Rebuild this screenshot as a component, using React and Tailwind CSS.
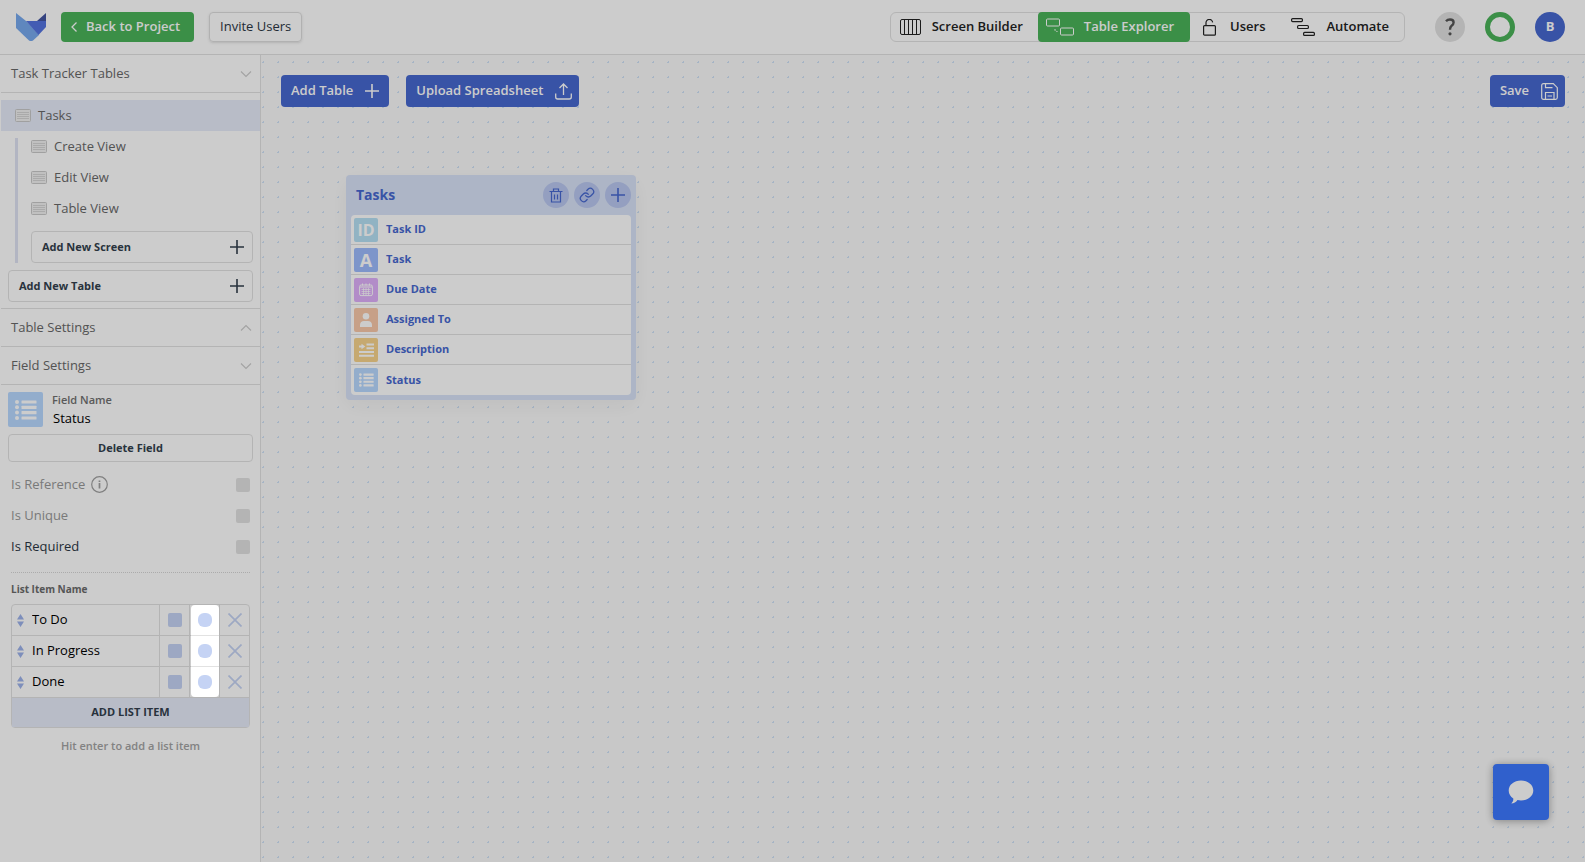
import React, { useState } from 'react';

const line = { fill: 'none', stroke: 'currentColor' };

function Logo() {
  return (
    <svg className="h-7 w-[30px]" viewBox="0 0 30 28" aria-label="Home" role="img">
      <path d="M0 0l10 8 13 14-6 5.500q-2 1-4 0L0 15z" fill="#77a9ee" />
      <path d="M10 8h20v6L22.500 22z" fill="#5474e0" />
      <path d="M30 0v8h-9z" fill="#41539f" />
    </svg>
  );
}

function Plus({ className }) {
  return (
    <svg className={className} viewBox="0 0 14 14" {...line} strokeWidth="1.6" aria-hidden="true">
      <path d="M7 0v14M0 7h14" />
    </svg>
  );
}

function Chevron({ up }) {
  return (
    <svg className="h-2 w-3 text-[#ccc]" viewBox="0 0 12 8" {...line} strokeWidth="1.1" aria-hidden="true">
      <path d={up ? 'M1 6.500l5-5 5 5' : 'M1 1.500l5 5 5-5'} />
    </svg>
  );
}

function SheetIcon() {
  return (
    <svg className="h-[13px] w-4 shrink-0 text-[#c8c8c8]" viewBox="0 0 16 13" {...line} aria-hidden="true">
      <rect x=".5" y=".5" width="15" height="12" rx="1" fill="#f0f0f0" />
      <path d="M2 3.500h12M2 5.500h12M2 7.500h12M2 9.500h12" strokeWidth=".7" />
    </svg>
  );
}

function ListGlyph({ className }) {
  return (
    <svg className={className} viewBox="0 0 22 20" fill="#fff" aria-hidden="true">
      {[0, 5.3, 10.600, 16].map((y) => (
        <g key={y}>
          <circle cx="2" cy={y + 2} r="2" />
          <rect x="6.500" y={y + 0.4} width="15" height="3.200" rx=".5" />
        </g>
      ))}
    </svg>
  );
}

const glyphs = {
  id: <span className="text-base leading-6 font-bold text-white">ID</span>,
  text: <span className="text-lg leading-6 font-bold text-white">A</span>,
  date: (
    <svg className="h-3.5 w-3.5" viewBox="0 0 14 14" fill="none" stroke="#fff" aria-hidden="true">
      <rect x=".6" y="2" width="12.800" height="10.600" rx="1.500" />
      <path d="M3.500 .5v2M7 .5v2M10.500 .5v2M1 4h12" />
      <path d="M2.500 6.500h9M2.500 8.500h9M2.500 10.500h9M4.500 5v7M7 5v7M9.500 5v7" strokeWidth=".7" />
    </svg>
  ),
  user: (
    <svg className="h-3.5 w-3" viewBox="0 0 12 14" fill="#fff" aria-hidden="true">
      <circle cx="6" cy="3.300" r="3.300" />
      <path d="M0 14v-2c0-2.600 1.700-4 4-4h4c2.300 0 4 1.400 4 4v2z" />
    </svg>
  ),
  long: (
    <svg className="h-3.5 w-[15px]" viewBox="0 0 15 14" fill="#fff" aria-hidden="true">
      <path d="M0 2.500h2.500V.7L6.300 3.500 2.500 6.300V4.500H0zM7.500 .5H15v2H7.500zM7.500 4.300H15v2H7.500zM0 8h15v2H0zM0 11.700h15v2H0z" />
    </svg>
  ),
  list: <ListGlyph className="h-3.5 w-[15px]" />,
};

const fields = [
  ['Task ID', 'id', 'bg-[#b6e0f4]'],
  ['Task', 'text', 'bg-[#9dbbfd]'],
  ['Due Date', 'date', 'bg-[#dfb0fb]'],
  ['Assigned To', 'user', 'bg-[#f9c9a9]'],
  ['Description', 'long', 'bg-[#f8d48c]'],
  ['Status', 'list', 'bg-[#b8d9ff]'],
];

function SectionHeader({ title, up }) {
  return (
    <button className="flex h-[38px] w-full items-center justify-between border-b border-[#e2e2e2] pr-2 pl-2.5 text-[13px] font-medium text-[#686868]">
      {title}
      <Chevron up={up} />
    </button>
  );
}

function SideLink({ children, active }) {
  return (
    <a
      href="#screen"
      className={
        active
          ? 'flex h-[31px] items-center gap-[7px] bg-[#e6ebf9] pl-3.5 text-[13px] font-medium text-[#686868]'
          : 'flex h-[31px] items-center gap-[7px] text-[13px] font-medium text-[#686868]'
      }
    >
      <SheetIcon />
      {children}
    </a>
  );
}

function AddButton({ children }) {
  return (
    <button className="flex h-8 w-full items-center justify-between rounded-sm border border-[#e2e2e2] px-2 pl-2.5 text-[11px] font-bold text-[#333f4d]">
      {children}
      <Plus className="h-3.5 w-3.5" />
    </button>
  );
}

function CheckRow({ id, label, disabled, info }) {
  return (
    <div className="flex h-[31px] items-center justify-between">
      <div className="flex items-center gap-1.5">
        <label
          htmlFor={id}
          className={disabled ? 'text-[13px] font-medium text-[#989898]' : 'text-[13px] font-medium text-[#2b3644]'}
        >
          {label}
        </label>
        {info && (
          <svg className="h-[17px] w-[17px] text-[#a0a0a0]" viewBox="0 0 17 17" {...line} strokeWidth="1.200" aria-hidden="true">
            <circle cx="8.500" cy="8.500" r="7.800" />
            <path d="M8.500 7v5.500M8.500 4.500v1.500" strokeWidth="1.700" />
          </svg>
        )}
      </div>
      <input
        id={id}
        type="checkbox"
        disabled={disabled}
        className="h-3.5 w-3.5 appearance-none rounded-xs bg-[#e2e2e2] checked:bg-[#4768d0]"
      />
    </div>
  );
}

function ListItem({ name }) {
  const [value, setValue] = useState(name);
  return (
    <li className="flex h-[31px] divide-x divide-[#e2e2e2] border-b border-[#e2e2e2]">
      <div className="flex min-w-0 flex-1 items-center gap-2 pl-[5px]">
        <svg className="h-[13px] w-[7px] shrink-0" viewBox="0 0 7 13" fill="#9db2ea" aria-hidden="true">
          <path d="M3.500 0L7 5.500H0zM3.500 13L7 7.500H0z" />
        </svg>
        <input
          aria-label="List item name"
          value={value}
          onChange={(e) => setValue(e.target.value)}
          className="w-full min-w-0 bg-transparent text-[13px] font-medium text-black outline-none"
        />
      </div>
      <div className="flex w-[30px] items-center justify-center">
        <button aria-label="Item color" className="h-3.5 w-3.5 rounded-xs bg-[#c5d3f4]" />
      </div>
      <div className="flex w-[30px] items-center justify-center">
        <button aria-label="Default item" className="h-3.5 w-3.5 rounded-md bg-[#c5d3f4]" />
      </div>
      <button aria-label="Remove item" className="flex w-[29px] items-center justify-center text-[#c5d3f4]">
        <svg className="h-3.5 w-3.5" viewBox="0 0 14 14" {...line} strokeWidth="1.700" aria-hidden="true">
          <path d="M.5 .5l13 13M13.500 .5l-13 13" />
        </svg>
      </button>
    </li>
  );
}

function TopBar() {
  return (
    <header className="flex h-[55px] items-center border-b border-[#e2e2e2] bg-white pr-5 pl-4">
      <Logo />
      <button className="ml-[15px] flex h-[30px] items-center gap-[9px] rounded-sm bg-[#4ab359] px-2.5 pr-3.5 text-[13px] font-semibold text-white">
        <svg className="h-2.5 w-1.5" viewBox="0 0 6 10" {...line} strokeWidth="1.300" aria-hidden="true">
          <path d="M5.500 .5L1 5l4.500 4.500" />
        </svg>
        Back to Project
      </button>
      <button className="ml-[15px] h-[30px] rounded-sm border border-[#dedede] px-2.5 text-[13px] font-medium text-[#2b3644] shadow-sm">
        Invite Users
      </button>
      <nav className="ml-auto flex h-[30px] items-stretch rounded-md border border-[#e2e2e2] text-[13px] font-semibold text-[#222]">
        <a href="#screens" className="flex items-center gap-[11px] pr-[15px] pl-[9px]">
          <svg className="h-4 w-[21px]" viewBox="0 0 21 16" {...line} aria-hidden="true">
            <rect x=".5" y=".5" width="20" height="15" rx="1.500" />
            <path d="M4.500 .5v15M8.500 .5v15M12.500 .5v15M16.500 .5v15" />
          </svg>
          Screen Builder
        </a>
        <a href="#tables" className="-my-px flex items-center gap-2.5 rounded-sm bg-[#4ab359] pr-4 pl-2 text-white">
          <svg className="h-[18px] w-7" viewBox="0 0 28 18" {...line} aria-hidden="true">
            <rect x=".5" y="1" width="13" height="7" rx="1" />
            <rect x="14.500" y="10" width="13" height="7" rx="1" />
            <path d="M9 11v1q0 1.500 2.500 1.500" strokeDasharray="2 1" />
          </svg>
          Table Explorer
        </a>
        <a href="#users" className="flex items-center gap-3.5 pl-[13px]">
          <svg className="h-[17px] w-[13px]" viewBox="0 0 13 17" {...line} strokeWidth="1.200" aria-hidden="true">
            <rect x=".6" y="6.600" width="11.800" height="9.600" rx="1" />
            <path d="M3 6.500V4a3.300 3.300 0 0 1 6.600-.6" />
          </svg>
          Users
        </a>
        <a href="#automate" className="flex items-center gap-[11px] pr-[15px] pl-[26px]">
          <svg className="h-[18px] w-6" viewBox="0 0 24 18" {...line} strokeWidth="1.200" aria-hidden="true">
            <rect x=".6" y=".6" width="10.800" height="3" rx="1" />
            <rect x="6.600" y="7.500" width="10.800" height="3" rx="1" />
            <rect x="12.600" y="14.400" width="10.800" height="3" rx="1" />
          </svg>
          Automate
        </a>
      </nav>
      <div className="ml-[30px] flex gap-5">
        <button aria-label="Help" className="flex h-[30px] w-[30px] items-center justify-center rounded-full bg-[#e2e2e2] text-[#555]">
          <svg className="h-[18px] w-3" viewBox="0 0 12 18" {...line} strokeWidth="2.400" aria-hidden="true">
            <path d="M2 3.200Q3.500 1.500 6 1.500q3.600 0 3.600 3 0 1.800-2 3.200Q6 8.800 6 11.800" />
            <circle cx="6" cy="15.800" r="1.600" fill="currentColor" stroke="none" />
          </svg>
        </button>
        <button aria-label="Progress" className="h-[30px] w-[30px] rounded-full border-[5px] border-[#4ab359]" />
        <button aria-label="Account" className="h-[30px] w-[30px] rounded-full bg-[#4768d0] text-[13px] font-bold text-white">
          B
        </button>
      </div>
    </header>
  );
}

function Sidebar() {
  const [name, setName] = useState('Status');
  return (
    <aside className="w-[261px] shrink-0 border-r border-[#e2e2e2] bg-white pl-px">
      <SectionHeader title="Task Tracker Tables" />
      <div className="border-b border-[#e2e2e2] pt-[7px] pb-1.5">
        <SideLink active>Tasks</SideLink>
        <div className="mb-[7px] flex gap-[13px] pr-[7px] pl-3.5">
          <div className="mt-[7px] w-[3px] bg-[#dfe3f3]" />
          <div className="flex-1">
            <SideLink>Create View</SideLink>
            <SideLink>Edit View</SideLink>
            <SideLink>Table View</SideLink>
            <div className="pt-[7px]">
              <AddButton>Add New Screen</AddButton>
            </div>
          </div>
        </div>
        <div className="px-[7px]">
          <AddButton>Add New Table</AddButton>
        </div>
      </div>
      <SectionHeader title="Table Settings" up />
      <SectionHeader title="Field Settings" />
      <div className="px-[7px] pt-[7px]">
        <div className="flex gap-2">
          <div className="flex h-[35px] w-[35px] items-center justify-center rounded-xs bg-[#b8d9ff]">
            <ListGlyph className="h-5 w-[22px]" />
          </div>
          <div className="min-w-0 flex-1">
            <label htmlFor="field-name" className="block pl-px text-[11px] leading-4 font-semibold text-[#707070]">
              Field Name
            </label>
            <input
              id="field-name"
              value={name}
              onChange={(e) => setName(e.target.value)}
              className="block h-5 w-full bg-transparent pl-0.5 text-[13px] font-medium text-black outline-none"
            />
          </div>
        </div>
        <button className="mt-1.5 h-7 w-full rounded-sm border border-[#e2e2e2] text-[11px] font-bold text-[#333f4d]">
          Delete Field
        </button>
      </div>
      <div className="mr-2.5 ml-2.5">
        <div className="border-b border-dotted border-[#d6d6d6] pt-[7px] pb-2.5">
          <CheckRow id="is-reference" label="Is Reference" disabled info />
          <CheckRow id="is-unique" label="Is Unique" disabled />
          <CheckRow id="is-required" label="Is Required" />
        </div>
        <h3 className="mt-2 text-[10px] leading-4 font-bold text-[#6b6b6b]">List Item Name</h3>
        <div className="relative mt-[7px] rounded-sm border border-[#e2e2e2]">
          <ul>
            <ListItem name="To Do" />
            <ListItem name="In Progress" />
            <ListItem name="Done" />
          </ul>
          <button className="h-[29px] w-full bg-[#e6ebf9] text-[11px] font-bold text-[#333f4d]">ADD LIST ITEM</button>
          <div className="pointer-events-none absolute top-0 right-[30px] z-50 h-[92px] w-7 rounded-sm shadow-[0_0_0_9999px_rgba(0,0,0,0.2)]" />
        </div>
        <p className="mt-2.5 text-center text-[11px] leading-4 font-semibold text-[#a3a3a3]">Hit enter to add a list item</p>
      </div>
    </aside>
  );
}

function RoundButton({ label, children }) {
  return (
    <button aria-label={label} className="flex h-[26px] w-[26px] items-center justify-center rounded-full bg-[#b9c7f0]">
      {children}
    </button>
  );
}

function TableCard() {
  return (
    <section className="mt-[68px] ml-[65px] w-[290px] rounded-sm bg-[#d9e3f8] px-[5px] pb-[5px] text-[#4768d0] shadow-[0_6px_22px_rgba(0,0,0,0.05)]">
      <header className="flex h-10 items-center gap-[5px] pl-[5px]">
        <h2 className="mr-auto text-sm font-bold">Tasks</h2>
        <RoundButton label="Delete table">
          <svg className="h-[15px] w-3.5" viewBox="0 0 14 15" {...line} strokeWidth="1.200" aria-hidden="true">
            <path d="M.5 3.500h13M4.500 3.500v-2.500h5v2.500M2.500 3.500v10.500h9V3.500M5.500 6.500v5M8.500 6.500v5" />
          </svg>
        </RoundButton>
        <RoundButton label="Link table">
          <svg className="h-4 w-4" viewBox="0 0 24 24" {...line} strokeWidth="1.900" strokeLinecap="round" aria-hidden="true">
            <path d="M10 13a5 5 0 0 0 7.540.54l3-3a5 5 0 0 0-7.070-7.070l-1.720 1.710M14 11a5 5 0 0 0-7.540-.54l-3 3a5 5 0 0 0 7.070 7.070l1.710-1.710" />
          </svg>
        </RoundButton>
        <RoundButton label="Add field">
          <Plus className="h-3.5 w-3.5" />
        </RoundButton>
      </header>
      <ul className="divide-y divide-[#e2e2e2] rounded-sm bg-white">
        {fields.map(([name, glyph, tone]) => (
          <li key={name} className="flex h-[30px] items-center gap-2 pl-[3px] text-[11px] font-bold">
            <span className={`flex h-6 w-6 items-center justify-center rounded-xs ${tone}`}>{glyphs[glyph]}</span>
            {name}
          </li>
        ))}
      </ul>
    </section>
  );
}

function Canvas() {
  return (
    <main className="min-w-0 flex-1 bg-[#fbfbfb] bg-[radial-gradient(circle,#cfe1f7_1px,transparent_1px)] bg-size-[15px_15px] bg-position-[-5px_0px] p-5">
      <div className="flex h-8 gap-[17px] text-[13px] font-semibold text-white">
        <button className="flex items-center gap-3 rounded-sm bg-[#4768d0] px-2.5">
          Add Table
          <Plus className="h-3.5 w-3.5" />
        </button>
        <button className="flex items-center gap-3 rounded-sm bg-[#4768d0] pr-[7px] pl-2.5">
          Upload Spreadsheet
          <svg className="h-[17px] w-[17px]" viewBox="0 0 17 17" {...line} strokeWidth="1.300" aria-hidden="true">
            <path d="M8.500 12V1M4.500 5l4-4 4 4M.7 10.500V14q0 2 2 2h11.600q2 0 2-2v-3.500" />
          </svg>
        </button>
        <button className="ml-auto flex items-center gap-3 rounded-sm bg-[#4768d0] pr-[7px] pl-2.5">
          Save
          <svg className="h-[17px] w-[17px]" viewBox="0 0 17 17" {...line} strokeWidth="1.200" aria-hidden="true">
            <path d="M2.500 .7h9.800l4 4v9.800q0 1.800-1.800 1.800h-12q-1.800 0-1.800-1.800v-12q0-1.800 1.800-1.800zM4.500 .7v4h7M4.500 16V9.500h8.500V16M6.500 13h4.500" />
          </svg>
        </button>
      </div>
      <TableCard />
    </main>
  );
}

export default function App() {
  return (
    <div className="relative flex min-h-screen flex-col overflow-hidden bg-white font-['Open_Sans',sans-serif]">
      <TopBar />
      <div className="flex flex-1">
        <Sidebar />
        <Canvas />
      </div>
      <button
        aria-label="Open chat"
        className="fixed right-9 bottom-[42px] flex h-14 w-14 items-center justify-center rounded-sm bg-[#3d78ff] shadow-[0_1px_8px_rgba(0,0,0,0.35)]"
      >
        <svg className="h-6 w-[26px]" viewBox="0 0 26 24" fill="#fff" aria-hidden="true">
          <path d="M13 .5c7 0 12.300 4.400 12.300 10S20 20.500 13 20.500c-1.300 0-2.400-.1-3.500-.4C8 22.500 6 23.500 3.300 23.500c1.500-1.500 2.200-3 2-5C2.500 16.700 .7 13.800 .7 10.500.7 4.900 6 .5 13 .5z" />
        </svg>
      </button>
    </div>
  );
}
